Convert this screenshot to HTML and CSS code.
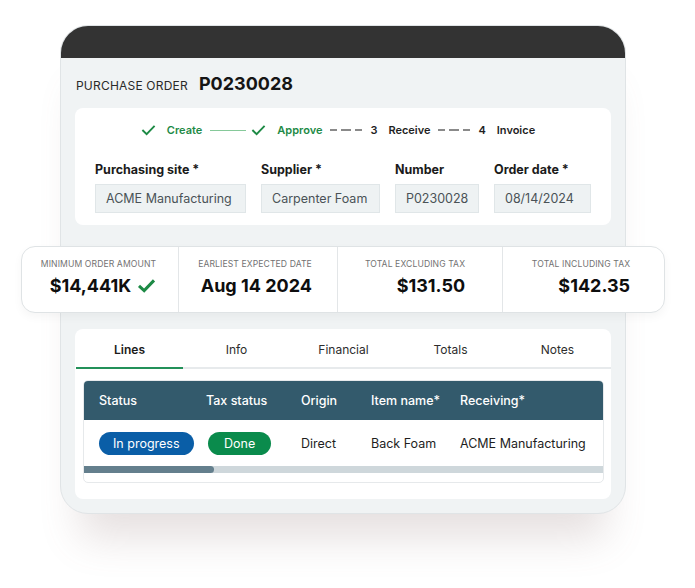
FILE: index.html
```html
<!DOCTYPE html>
<html lang="en">
<head>
    <meta charset="UTF-8">
    <meta name="viewport" content="width=device-width, initial-scale=1.0">
    <title>Purchase order</title>
    <link rel="stylesheet" href="styles.css">
</head>
<body>
    <div class="page">
    <div class="device">
        <div class="device-top"></div>
        <div class="device-body">
            <div class="po-title">
                <span class="po-label">PURCHASE ORDER</span>
                <span class="po-number">P0230028</span>
            </div>

            <div class="card header-card">
                <div class="stepper">
                    <div class="step done">
                        <svg class="step-check" viewBox="0 0 16 12"><polyline points="1.5,6 6,10.5 14.5,1.5"/></svg>
                        <span>Create</span>
                    </div>
                    <div class="step-line solid"></div>
                    <div class="step done">
                        <svg class="step-check" viewBox="0 0 16 12"><polyline points="1.5,6 6,10.5 14.5,1.5"/></svg>
                        <span>Approve</span>
                    </div>
                    <div class="step-line dashed"></div>
                    <div class="step">
                        <span class="step-num">3</span>
                        <span>Receive</span>
                    </div>
                    <div class="step-line dashed"></div>
                    <div class="step">
                        <span class="step-num">4</span>
                        <span>Invoice</span>
                    </div>
                </div>

                <div class="fields">
                    <div class="field">
                        <label>Purchasing site *</label>
                        <div class="input">ACME Manufacturing</div>
                    </div>
                    <div class="field">
                        <label>Supplier *</label>
                        <div class="input">Carpenter Foam</div>
                    </div>
                    <div class="field">
                        <label>Number</label>
                        <div class="input">P0230028</div>
                    </div>
                    <div class="field">
                        <label>Order date *</label>
                        <div class="input">08/14/2024</div>
                    </div>
                </div>
            </div>

            <div class="summary">
                <div class="summary-col">
                    <div class="summary-inner">
                        <div class="summary-label">Minimum order amount</div>
                        <div class="summary-value">$14,441K
                            <svg class="summary-check" viewBox="0 0 20 16"><polyline points="2,8.5 7.5,13.5 18,2.5"/></svg>
                        </div>
                    </div>
                </div>
                <div class="summary-col">
                    <div class="summary-inner">
                        <div class="summary-label">Earliest expected date</div>
                        <div class="summary-value">Aug 14 2024</div>
                    </div>
                </div>
                <div class="summary-col">
                    <div class="summary-inner">
                        <div class="summary-label">Total excluding tax</div>
                        <div class="summary-value">$131.50</div>
                    </div>
                </div>
                <div class="summary-col">
                    <div class="summary-inner">
                        <div class="summary-label">Total including tax</div>
                        <div class="summary-value">$142.35</div>
                    </div>
                </div>
            </div>

            <div class="card lines-card">
                <div class="tabs">
                    <div class="tab active">Lines</div>
                    <div class="tab">Info</div>
                    <div class="tab">Financial</div>
                    <div class="tab">Totals</div>
                    <div class="tab">Notes</div>
                </div>

                <div class="table">
                    <div class="table-row table-head">
                        <div>Status</div>
                        <div>Tax status</div>
                        <div>Origin</div>
                        <div>Item name*</div>
                        <div>Receiving*</div>
                    </div>
                    <div class="table-row">
                        <div><span class="pill pill-blue">In progress</span></div>
                        <div><span class="pill pill-green">Done</span></div>
                        <div>Direct</div>
                        <div>Back Foam</div>
                        <div>ACME Manufacturing</div>
                    </div>
                    <div class="scrollbar">
                        <div class="scroll-thumb" style="width: 25%"></div>
                    </div>
                </div>
            </div>
        </div>
    </div>
    </div>
</body>
</html>
```

FILE: styles.css
```css
body {
    margin: 0;
    background-color: #ffffff;
    font-family: Inter, "Open Sans", sans-serif;
    color: #1d1d1d;
}
.page {
    min-height: 588px;
    padding-top: 25px;
    box-sizing: border-box;
}
.device {
    width: 566px;
    margin-left: 60px;
    background-color: #f0f3f4;
    border: 1px solid #e0e4e6;
    border-radius: 28px;
    box-shadow: 0 44px 40px -20px rgba(130, 100, 100, 0.2);
    box-sizing: border-box;
}
.device-top {
    height: 32px;
    background-color: #333333;
    border-radius: 27px 27px 0 0;
}
.device-body {
    padding: 0 14px 14px;
}
.po-title {
    display: flex;
    align-items: baseline;
    gap: 11px;
    height: 50px;
    padding: 15px 1px 0;
    box-sizing: border-box;
}
.po-label {
    font-size: 12px;
    letter-spacing: 0.2px;
    color: #2a2a2a;
}
.po-number {
    font-size: 18px;
    font-weight: 700;
    color: #151515;
}
.card {
    background-color: #ffffff;
    border-radius: 8px;
}
.header-card {
    padding: 14px 20px 12px;
}
.stepper {
    display: flex;
    align-items: center;
    justify-content: center;
    height: 16px;
    font-size: 11px;
    font-weight: 600;
    color: #1f1f1f;
    margin-left: -10px;
}
.step {
    display: flex;
    align-items: center;
    gap: 11px;
}
.step.done {
    color: #1d8a45;
}
.step-check {
    width: 15px;
    height: 12px;
    fill: none;
    stroke: #1d8a45;
    stroke-width: 2;
}
.step-line {
    width: 32px;
    margin: 0 8px;
}
.step-line.solid {
    width: 36px;
    border-top: 1.5px solid #86c99a;
    margin: 0 5px 0 8px;
}
.step-line.dashed {
    border-top: 2px dashed #8a8a8a;
    border-image: repeating-linear-gradient(90deg, #8a8a8a 0 8px, transparent 8px 12px) 2;
}
.fields {
    display: grid;
    grid-template-columns: 151px 119px 84px 97px;
    column-gap: 15px;
    margin-top: 25px;
}
.field label {
    display: block;
    font-size: 12.5px;
    font-weight: 700;
    color: #1b1b1b;
    line-height: 14px;
    margin-bottom: 7px;
}
.input {
    height: 29px;
    line-height: 27px;
    padding: 0 10px;
    background-color: #eef2f3;
    border: 1px solid #e0e6e8;
    box-sizing: border-box;
    font-size: 12.5px;
    color: #4a5257;
    white-space: nowrap;
    overflow: hidden;
}
.summary {
    display: flex;
    margin: 21px -54px 16px;
    height: 67px;
    background-color: #ffffff;
    border: 1.5px solid #dfe3e5;
    border-radius: 14px;
    box-shadow: 0 4px 10px rgba(0, 0, 0, 0.04);
    box-sizing: border-box;
}
.summary-col {
    flex: 1;
    display: flex;
    justify-content: center;
    padding: 12px 5px 0 0;
    border-left: 1px solid #e3e6e8;
    box-sizing: border-box;
}
.summary-col:first-child {
    border-left: none;
    flex: 0 0 156px;
    padding-right: 3px;
}
.summary-col:nth-child(2) {
    flex: 0 0 159px;
    padding-right: 6px;
}
.summary-col:nth-child(3) {
    flex: 0 0 165px;
    padding-right: 10px;
}
.summary-inner {
    display: flex;
    flex-direction: column;
    align-items: flex-end;
}
.summary-label {
    font-size: 8.6px;
    color: #727272;
    text-transform: uppercase;
    letter-spacing: 0.1px;
}
.summary-value {
    display: flex;
    align-items: center;
    gap: 6px;
    margin-top: 6px;
    font-size: 18px;
    font-weight: 700;
    color: #0e0e0e;
}
.summary-check {
    width: 19px;
    height: 15px;
    fill: none;
    stroke: #1d8a45;
    stroke-width: 3.2;
}
.lines-card {
    padding: 0 7px 16px 8px;
}
.tabs {
    display: flex;
    margin: 0 -7px 0 -7px;
    border-bottom: 2px solid #e7eaec;
}
.tab {
    flex: 1;
    text-align: center;
    height: 38px;
    line-height: 41px;
    font-size: 12px;
    color: #2d2d2d;
}
.tab.active {
    font-weight: 600;
    color: #1b1b1b;
    border-bottom: 2px solid #239159;
    margin-bottom: -2px;
}
.table {
    margin-top: 11px;
    border: 1px solid #e6e9eb;
    border-radius: 5px;
    overflow: hidden;
    padding-bottom: 9px;
}
.table-row {
    display: grid;
    grid-template-columns: 107px 95px 70px 89px 1fr;
    align-items: center;
    padding-left: 15px;
    height: 46px;
    font-size: 12.5px;
    color: #1e1e1e;
}
.table-head {
    height: 39px;
    background-color: #335a6c;
    color: #ffffff;
    font-weight: 500;
}
.pill {
    display: inline-block;
    height: 23px;
    line-height: 23px;
    padding: 0 14px;
    border-radius: 12px;
    color: #ffffff;
}
.pill-blue {
    background-color: #0a5ea7;
}
.pill-green {
    background-color: #0a8b4c;
    margin-left: 2px;
    padding: 0 16px;
}
.scrollbar {
    height: 7px;
    background-color: #ced7db;
}
.scroll-thumb {
    height: 100%;
    background-color: #647f8d;
    border-radius: 0 4px 4px 0;
}
```
